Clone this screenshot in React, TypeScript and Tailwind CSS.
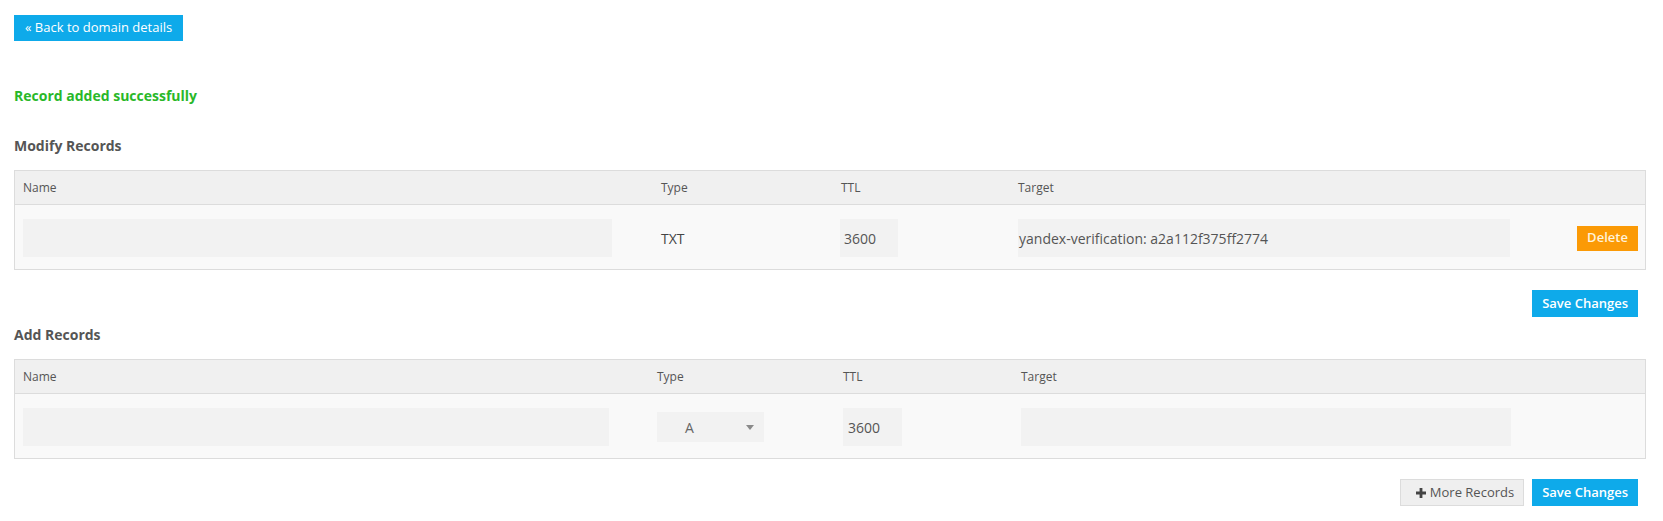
import React from "react";

function PlusIcon() {
  return (
    <svg width="10" height="10" viewBox="0 0 10 10" className="shrink-0">
      <path d="M3.6 0h2.8v3.6H10v2.8H6.4V10H3.6V6.4H0V3.6h3.6z" fill="#444" />
    </svg>
  );
}

function Caret() {
  return (
    <svg width="8" height="5" viewBox="0 0 8 5">
      <path d="M0 0h8L4 5z" fill="#8a8a8a" />
    </svg>
  );
}

function HeaderCell({ children }: { children: React.ReactNode }) {
  return <div className="flex items-center pl-[8px] text-[12px] text-[#555]">{children}</div>;
}

export default function App() {
  return (
    <div className="min-h-[521px] bg-white pl-[14px] pr-[17px] pt-[15px] font-['Open_Sans',sans-serif] text-[#555]">
      <button className="flex h-[26px] items-center bg-[#0eaaea] px-[11px] text-[13px] text-white">
        « Back to domain details
      </button>

      <div className="mt-[45px] h-[20px] text-[14px] font-bold leading-[20px] text-[#29b829]">
        Record added successfully
      </div>

      <h2 className="mt-[30px] h-[20px] text-[14px] font-bold leading-[20px] text-[#555]">Modify Records</h2>

      {/* existing records */}
      <div className="mt-[14px] border border-[#dcdcdc]">
        <div className="grid h-[34px] grid-cols-[638px_180px_177px_1fr_auto] border-b border-[#dcdcdc] bg-[#f0f0f0]">
          <HeaderCell>Name</HeaderCell>
          <HeaderCell>Type</HeaderCell>
          <HeaderCell>TTL</HeaderCell>
          <HeaderCell>Target</HeaderCell>
          <div />
        </div>
        <div className="grid h-[64px] grid-cols-[638px_180px_177px_1fr_auto] items-center bg-[#f9f9f9]">
          <div className="pl-[8px] pt-[2px]">
            <div className="h-[38px] w-[589px] bg-[#f2f2f2]" />
          </div>
          <div className="pl-[8px] pt-[2px] text-[14px] text-[#444]">TXT</div>
          <div className="pl-[7px] pt-[2px]">
            <div className="flex h-[38px] w-[58px] items-center bg-[#f2f2f2] pl-[4px] text-[14px] text-[#555]">3600</div>
          </div>
          <div className="pl-[8px] pt-[2px]">
            <div className="flex h-[38px] w-[492px] items-center bg-[#f2f2f2] pl-[1px] text-[14px] text-[#555]">
              yandex-verification: a2a112f375ff2774
            </div>
          </div>
          <div className="pr-[7px] pt-[2px]">
            <button className="flex h-[25px] w-[61px] items-center justify-center bg-[#fb9a06] text-[13px] font-semibold text-[#fff3dc]">
              Delete
            </button>
          </div>
        </div>
      </div>

      <div className="mt-[20px] flex justify-end pr-[8px]">
        <button className="flex h-[27px] items-center bg-[#0eaaea] px-[10px] text-[13px] font-semibold text-white">
          Save Changes
        </button>
      </div>

      <h2 className="mt-[8px] h-[20px] text-[14px] font-bold leading-[20px] text-[#555]">Add Records</h2>

      {/* new records */}
      <div className="mt-[14px] border border-[#dcdcdc]">
        <div className="grid h-[34px] grid-cols-[634px_186px_178px_1fr] border-b border-[#dcdcdc] bg-[#f0f0f0]">
          <HeaderCell>Name</HeaderCell>
          <HeaderCell>Type</HeaderCell>
          <HeaderCell>TTL</HeaderCell>
          <HeaderCell>Target</HeaderCell>
        </div>
        <div className="grid h-[64px] grid-cols-[634px_186px_178px_1fr] items-center bg-[#f9f9f9]">
          <div className="pl-[8px] pt-[2px]">
            <div className="h-[38px] w-[586px] bg-[#f2f2f2]" />
          </div>
          <div className="pl-[8px] pt-[2px]">
            <div className="flex h-[30px] w-[107px] items-center justify-between bg-[#f2f2f2] pl-[28px] pr-[10px] text-[14px] text-[#666]">
              <span>A</span>
              <Caret />
            </div>
          </div>
          <div className="pl-[8px] pt-[2px]">
            <div className="flex h-[38px] w-[59px] items-center bg-[#f2f2f2] pl-[5px] text-[14px] text-[#555]">3600</div>
          </div>
          <div className="pl-[8px] pt-[2px]">
            <div className="h-[38px] w-[490px] bg-[#f2f2f2]" />
          </div>
        </div>
      </div>

      <div className="mt-[20px] flex justify-end gap-[8px] pr-[8px] pb-[15px]">
        <button className="flex h-[27px] items-center gap-[4px] border border-[#dcdcdc] bg-[#efefef] pl-[15px] pr-[9px] text-[13px] text-[#555]">
          <PlusIcon />
          More Records
        </button>
        <button className="flex h-[27px] items-center bg-[#0eaaea] px-[10px] text-[13px] font-semibold text-white">
          Save Changes
        </button>
      </div>
    </div>
  );
}
